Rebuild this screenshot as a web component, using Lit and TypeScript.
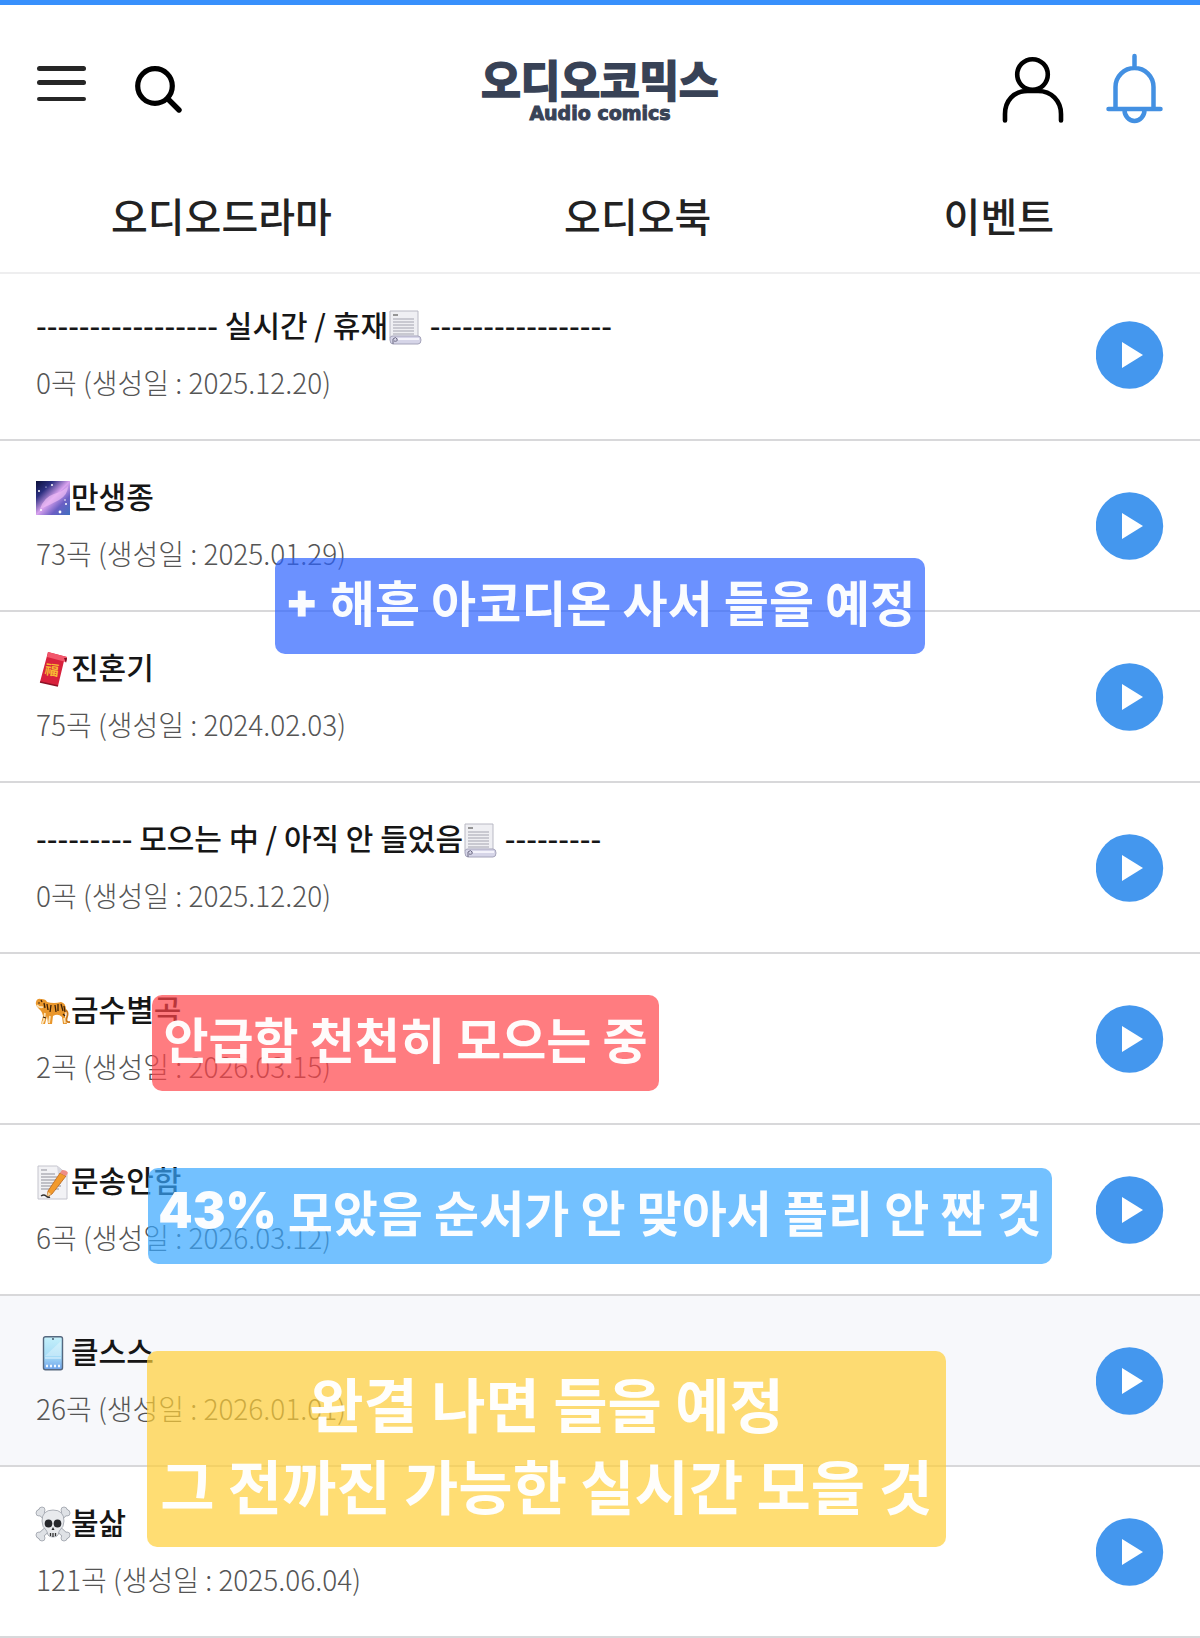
import { LitElement, html, svg, css } from "lit";
import { customElement, property } from "lit/decorators.js";

type Icon = "scroll" | "galaxy" | "envelope" | "tiger" | "memo" | "phone" | "skull";

interface Playlist {
  before: string;
  icon: Icon;
  after: string;
  count: number;
  created: string;
  active?: boolean;
}

const PLAYLISTS: Playlist[] = [
  { before: "----------------- 실시간 / 휴재", icon: "scroll", after: " -----------------", count: 0, created: "2025.12.20" },
  { before: "", icon: "galaxy", after: "만생종", count: 73, created: "2025.01.29" },
  { before: "", icon: "envelope", after: "진혼기", count: 75, created: "2024.02.03" },
  { before: "--------- 모으는 中 / 아직 안 들었음", icon: "scroll", after: " ---------", count: 0, created: "2025.12.20" },
  { before: "", icon: "tiger", after: "금수별곡", count: 2, created: "2026.03.15" },
  { before: "", icon: "memo", after: "문송안함", count: 6, created: "2026.03.12" },
  { before: "", icon: "phone", after: "클스스", count: 26, created: "2026.01.01", active: true },
  { before: "", icon: "skull", after: "불삶", count: 121, created: "2025.06.04" },
];

const ICONS = {
  scroll: svg`
    <path d="M2 1H30V28H2Z" fill="#efeff3" stroke="#b9b9c4"/>
    <path d="M5 5h5" stroke="#777" stroke-width="1.5"/>
    <path d="M5 9h21M5 12h21M5 15h21M5 18h21M5 21h21M5 24h21" stroke="#a3a3af" stroke-width="1"/>
    <path d="M2 28Q2 26 5 26H30Q33 26 33 30T30 34H5Q2 34 2 30Z" fill="#d6d5e8" stroke="#a5a4ba"/>
    <path d="M5 34V29Q8 26 9 29T6 31" fill="none" stroke="#6d6b83"/>
    <path d="M10 29H31" stroke="#f4f3fb" stroke-width="2"/>`,
  galaxy: svg`
    <defs><linearGradient id="sky" x1="0" y1="0" x2="1" y2="1">
      <stop offset="0" stop-color="#0b1038"/><stop offset=".25" stop-color="#2b2f80"/>
      <stop offset=".5" stop-color="#d9a2ee"/><stop offset=".72" stop-color="#6b5fc4"/><stop offset="1" stop-color="#3f6fc0"/>
    </linearGradient></defs>
    <rect width="34" height="34" fill="url(#sky)"/>
    <path d="M4 28Q8 16 18 13T32 5Q32 14 23 19T4 28Z" fill="#f0bdf6" opacity=".65"/>
    <g fill="#fff"><circle cx="3" cy="10" r="1"/><circle cx="16" cy="4" r="1"/><circle cx="30" cy="23" r="1"/><circle cx="24" cy="31" r="1.4"/><circle cx="5" cy="29" r="1"/><circle cx="10" cy="6" r=".6"/><circle cx="29" cy="19" r=".8"/></g>`,
  envelope: svg`
    <path d="M12 0L31 5L30 10L28 9L22 34L4 30Z" fill="#d8213c"/>
    <path d="M12 0L31 5L30 10L11 5Z" fill="#f2566b"/>
    <path d="M28 6L31 6L30 11Z" fill="#7d0d20"/>
    <path d="M4 30L22 34" stroke="#8c1226" stroke-width="1.5"/>
    <text x="9" y="23" font-size="14" font-weight="700" fill="#f7b733" font-family="Noto Sans CJK KR, sans-serif" transform="rotate(8 16 18)">福</text>`,
  tiger: svg`
    <g transform="translate(0 3)">
    <path d="M28 12Q33 14 31 20T34 25" fill="none" stroke="#c9761a" stroke-width="1.8"/>
    <path d="M0 5Q1 1 5 2Q10 2 11 5Q18 7 25 5Q30 6 30 13L29 19L31 27H27L26 20Q22 16 17 19L16 27H12L11 19L9 27H5L7 19Q6 14 3 12Q-1 9 0 5Z" fill="#e9962b"/>
    <path d="M1 8Q3 11 7 10M9 16L8 23L6 27M14 19L13 26M28 21L29 26" fill="none" stroke="#fbe3b6" stroke-width="1.8"/>
    <path d="M11 7L12 13M15 8L14 15M19 8L20 15M22 7L22 14M25 7L27 14M28 9L29 15M8 6L9 11M27 17L29 19M7 20L10 21M5 3L6 5" fill="none" stroke="#3c2109" stroke-width="1.3"/>
    <circle cx="3" cy="6" r=".8" fill="#222"/>
    </g>`,
  memo: svg`
    <path d="M2 1H21L31 9V34H2Z" fill="#f2f2f5" stroke="#c4c4cd"/>
    <path d="M21 1L22 9H31Z" fill="#d6d6de"/>
    <path d="M5 5h6M5 9h14M5 12h16M5 15h20M5 18h20M5 21h20M5 24h18" stroke="#8f8f99" stroke-width="1"/>
    <path d="M24 8L30 11L16 29L11 32L12 26Z" fill="#f29a2c" stroke="#b9651a" stroke-width=".8"/>
    <path d="M24 8L26 5Q31 5 32 8L30 11Z" fill="#ee8d86"/>
    <path d="M12 27L15 29L11 32Z" fill="#efd2a0"/>
    <path d="M5 31Q8 29 10 31T14 32" fill="none" stroke="#333" stroke-width="1.4"/>`,
  phone: svg`
    <defs><linearGradient id="screen" x1="0" y1="0" x2="0" y2="1">
      <stop offset="0" stop-color="#c5f1fb"/><stop offset=".6" stop-color="#a5dbf6"/><stop offset="1" stop-color="#6ca0ea"/>
    </linearGradient></defs>
    <rect x="7.5" y=".7" width="19" height="33" rx="2" fill="url(#screen)" stroke="#56687f" stroke-width="1.4"/>
    <path d="M9 20L25 5V20Z" fill="#fff" opacity=".3"/>
    <path d="M9 22H25" stroke="#e4f6ff"/>
    <circle cx="17" cy="3" r=".9" fill="#3d4c60"/>
    <path d="M10 30h2M14 30h2M18 30h2M22 30h2" stroke="#eef7ff" stroke-width="2.4"/>`,
  skull: svg`
    <g stroke="#9aa0a8" stroke-width="6.4" stroke-linecap="round"><path d="M4 5L30 29M30 5L4 29"/></g>
    <g fill="#dfe2e6" stroke="#9aa0a8" stroke-width=".8"><circle cx="6" cy="3" r="3"/><circle cx="3" cy="6" r="3"/><circle cx="28" cy="3" r="3"/><circle cx="31" cy="6" r="3"/><circle cx="3" cy="28" r="3"/><circle cx="6" cy="31" r="3"/><circle cx="31" cy="28" r="3"/><circle cx="28" cy="31" r="3"/></g>
    <path d="M4 5L30 29M30 5L4 29" stroke="#dfe2e6" stroke-width="5" stroke-linecap="round"/>
    <path d="M17 3Q28 3 28 14Q28 20 24 23Q23 24 22 28Q21 30 17 30T12 28Q11 24 10 23Q6 20 6 14Q6 3 17 3Z" fill="#e8eaed" stroke="#9aa0a8" stroke-width=".8"/>
    <ellipse cx="12.5" cy="16.5" rx="3.8" ry="4" fill="#26282c"/><ellipse cx="21.5" cy="16.5" rx="3.8" ry="4" fill="#26282c"/>
    <path d="M17 20L18.5 23H15.5Z" fill="#26282c"/>
    <path d="M14.5 26V29M17 26V30M19.5 26V29" stroke="#333" stroke-width="1.3"/>`,
};

@customElement("playlist-row")
class PlaylistRow extends LitElement {
  @property({ attribute: false }) item!: Playlist;

  static styles = css`
    :host { display: block; }
    .row {
      display: flex;
      align-items: center;
      justify-content: space-between;
      box-sizing: border-box;
      height: 171px;
      padding: 0 36px;
      border-bottom: 2px solid #d8d8da;
    }
    .active { background: #f7f8fb; }
    .info { padding-bottom: 4px; }
    .title {
      display: flex;
      align-items: center;
      margin: 0 0 10px;
      font-size: 30px;
      line-height: 48px;
      font-weight: 500;
      color: #161616;
      white-space: pre;
    }
    .icon { width: 34px; height: 34px; margin: 6px 1px 0 0; overflow: visible; }
    .meta {
      margin: 0;
      font-size: 28px;
      line-height: 48px;
      font-weight: 300;
      color: #555;
    }
    .play {
      width: 68px;
      height: 68px;
      padding: 0;
      border: 0;
      border-radius: 50%;
      background: none;
      cursor: pointer;
    }
    .play svg { display: block; }
  `;

  render() {
    const { before, icon, after, count, created, active } = this.item;
    return html`
      <div class="row ${active ? "active" : ""}">
        <div class="info">
          <h2 class="title">${before}<svg class="icon" viewBox="0 0 34 34" aria-hidden="true">${ICONS[icon]}</svg>${after}</h2>
          <p class="meta">${count}곡 (생성일 : ${created})</p>
        </div>
        <button class="play" aria-label="재생">
          <svg width="68" height="68" viewBox="0 0 68 68">
            <circle cx="33.5" cy="34" r="33.7" fill="#4497ee" />
            <path d="M26 21L47 34L26 47Z" fill="#fff" />
          </svg>
        </button>
      </div>
    `;
  }
}

@customElement("app-root")
class AppRoot extends LitElement {
  static styles = css`
    :host {
      display: block;
      position: relative;
      background: #fff;
      font-family: "Noto Sans CJK KR", sans-serif;
    }
    .header {
      display: grid;
      grid-template-columns: 1fr auto 1fr;
      box-sizing: border-box;
      height: 140px;
      padding: 0 36px;
      border-top: 5px solid #3890fc;
    }
    .tools { display: flex; align-items: center; gap: 44px; padding-top: 34px; }
    .end { justify-content: flex-end; gap: 40px; }
    .tool { display: block; padding: 0; border: 0; background: none; cursor: pointer; }
    .tool svg { display: block; }
    .logo {
      display: flex;
      flex-direction: column;
      align-items: center;
      padding-top: 48px;
      color: #384256;
      text-decoration: none;
    }
    .brand {
      font-size: 43px;
      line-height: 50px;
      font-weight: 700;
      -webkit-text-stroke: 2px #384256;
    }
    .latin {
      font-family: "DejaVu Sans", sans-serif;
      font-size: 19px;
      line-height: 20px;
      font-weight: 700;
      -webkit-text-stroke: 1px #384256;
    }
    .nav {
      display: flex;
      justify-content: space-between;
      box-sizing: border-box;
      height: 134px;
      padding: 0 146px 0 111px;
      border-bottom: 2px solid #eeeeef;
    }
    .nav a {
      padding-top: 45px;
      font-size: 40px;
      line-height: 60px;
      font-weight: 500;
      color: #222;
      text-decoration: none;
    }
    .list { margin-top: -4px; }
    .note {
      position: absolute;
      display: flex;
      align-items: center;
      justify-content: center;
      box-sizing: border-box;
      height: 96px;
      margin: 0;
      padding-bottom: 10px;
      border-radius: 10px;
      font-size: 49px;
      line-height: 82px;
      font-weight: 700;
      color: rgba(255, 255, 255, 0.97);
      text-align: center;
      white-space: pre;
    }
    .heavy { font-family: "Inter", sans-serif; font-weight: 900; }
    .indigo { left: 275px; top: 558px; width: 650px; background: rgba(44, 98, 255, 0.7); }
    .red { left: 152px; top: 995px; width: 507px; background: rgba(255, 68, 74, 0.7); }
    .sky { left: 148px; top: 1168px; width: 904px; background: rgba(55, 167, 255, 0.7); }
    .yellow { left: 147px; top: 1351px; width: 799px; height: 196px; font-size: 59px; background: rgba(255, 206, 55, 0.7); }
  `;

  render() {
    return html`
      <header class="header">
        <div class="tools">
          <button class="tool" aria-label="메뉴">
            <svg width="50" height="58" viewBox="0 0 50 58" fill="#262626">
              <rect x="1" y="5" width="49" height="5" rx="2.5" />
              <rect x="1" y="19" width="49" height="5" rx="2.5" />
              <rect x="1" y="36" width="49" height="4" rx="2" />
            </svg>
          </button>
          <button class="tool" aria-label="검색">
            <svg width="52" height="52" viewBox="0 0 52 52" fill="none" stroke="#000" stroke-linecap="round">
              <circle cx="25" cy="22" r="17.3" stroke-width="5.2" />
              <path d="M38 35L49 46" stroke-width="5.4" />
            </svg>
          </button>
        </div>
        <a class="logo" href="#">
          <span class="brand">오디오코믹스</span>
          <span class="latin">Audio comics</span>
        </a>
        <div class="tools end">
          <button class="tool" aria-label="내 정보">
            <svg width="66" height="70" viewBox="0 0 66 70" fill="none" stroke="#000" stroke-width="4.6" stroke-linecap="round">
              <circle cx="32.5" cy="19.5" r="15.3" />
              <path d="M5 65.5V59C5 46 13.5 36 27.5 36H38C51.5 36 61 46 61 59V65.5" />
            </svg>
          </button>
          <button class="tool" aria-label="알림">
            <svg width="58" height="74" viewBox="0 0 58 74" fill="none" stroke="#4390e2" stroke-width="4.5" stroke-linecap="round">
              <path d="M28.5 3V14M9.5 56V34A19 19 0 0 1 47.5 34V56M2.5 56H54.5M18.5 57A10 11 0 0 0 38.5 57" />
            </svg>
          </button>
        </div>
      </header>
      <nav class="nav">
        <a href="#">오디오드라마</a>
        <a href="#">오디오북</a>
        <a href="#">이벤트</a>
      </nav>
      <main class="list">${PLAYLISTS.map((item) => html`<playlist-row .item=${item}></playlist-row>`)}</main>
      <p class="note indigo"><span class="heavy">+</span> 해흔 아코디온 사서 들을 예정</p>
      <p class="note red">안급함 천천히 모으는 중</p>
      <p class="note sky"><span class="heavy">43%</span> 모았음 순서가 안 맞아서 플리 안 짠 것</p>
      <p class="note yellow">완결 나면 들을 예정<br />그 전까진 가능한 실시간 모을 것</p>
    `;
  }
}
